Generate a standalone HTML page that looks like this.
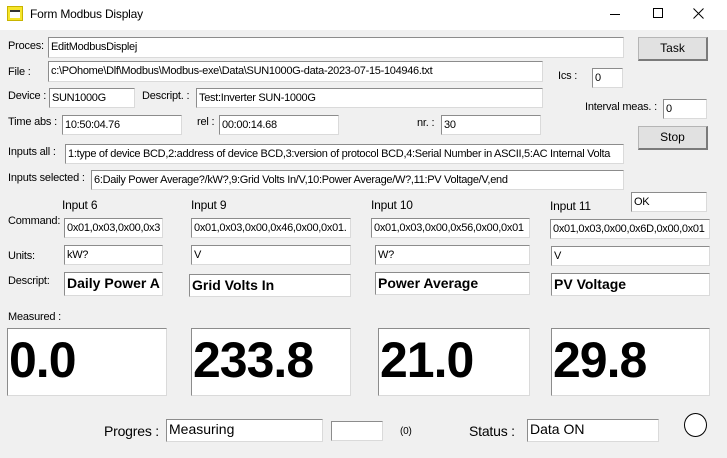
<!DOCTYPE html>
<html><head><meta charset="utf-8"><style>
*{margin:0;padding:0;box-sizing:border-box}
body{width:727px;height:458px;background:#f0f0f0;font-family:"Liberation Sans",Arial,sans-serif;font-size:11px;color:#000;position:relative;overflow:hidden}
.tb{position:absolute;left:0;top:0;width:727px;height:30px;background:#fff}
.a{position:absolute;white-space:nowrap;letter-spacing:-0.2px}
.e{position:absolute;background:#fff;border-top:1px solid #8c8c8c;border-left:1px solid #8c8c8c;border-right:1px solid #dadada;border-bottom:1px solid #dadada;white-space:nowrap;overflow:hidden;padding:3px 0 0 2px;line-height:13px;letter-spacing:-0.3px}
.b{position:absolute;background:#e1e1e1;border:1px solid #b5b5b5;border-right:2px solid #7a7a7a;border-bottom:2px solid #7a7a7a;text-align:center;line-height:20px;font-size:12px}
.d{font-weight:bold;font-size:14px;padding-top:4px;letter-spacing:0}
.big{font-weight:bold;font-size:50px;line-height:50px;padding:6px 0 0 1px;letter-spacing:-1px}
</style></head><body>
<div class="tb"></div>
<div class="a" style="left:7px;top:6px;width:16px;height:15px;background:#f6e52a;border:1px solid #c8b400"><div style="position:absolute;left:2px;top:3px;width:10px;height:8px;background:#fff;border-top:2px solid #333"></div></div>
<div class="a" style="left:30px;top:7px;font-size:12px">Form Modbus Display</div>
<div class="a" style="left:610px;top:14px;width:10px;height:1px;background:#000"></div>
<div class="a" style="left:653px;top:8px;width:10px;height:10px;border:1px solid #000"></div>
<svg class="a" style="left:693px;top:8px" width="11" height="11"><path d="M0.5 0.5L10.5 10.5M10.5 0.5L0.5 10.5" stroke="#000" stroke-width="1"/></svg>

<div class="a" style="left:8px;top:40px">Proces:</div>
<div class="e" style="left:48px;top:37px;width:576px;height:21px">EditModbusDisplej</div>
<div class="b" style="left:638px;top:37px;width:70px;height:24px">Task</div>
<div class="a" style="left:8px;top:66px">File :</div>
<div class="e" style="left:48px;top:61px;width:495px;height:21px">c:\POhome\Dlf\Modbus\Modbus-exe\Data\SUN1000G-data-2023-07-15-104946.txt</div>
<div class="a" style="left:558px;top:70px">Ics :</div>
<div class="e" style="left:592px;top:68px;width:31px;height:20px">0</div>
<div class="a" style="left:8px;top:90px">Device :</div>
<div class="e" style="left:49px;top:88px;width:86px;height:20px">SUN1000G</div>
<div class="a" style="left:142px;top:90px">Descript. :</div>
<div class="e" style="left:196px;top:88px;width:347px;height:20px">Test:Inverter SUN-1000G</div>
<div class="a" style="left:585px;top:101px">Interval meas. :</div>
<div class="e" style="left:663px;top:99px;width:44px;height:20px">0</div>
<div class="a" style="left:8px;top:116px">Time abs :</div>
<div class="e" style="left:62px;top:115px;width:120px;height:20px">10:50:04.76</div>
<div class="a" style="left:197px;top:116px">rel :</div>
<div class="e" style="left:219px;top:115px;width:120px;height:20px">00:00:14.68</div>
<div class="a" style="left:417px;top:117px">nr. :</div>
<div class="e" style="left:441px;top:115px;width:100px;height:20px">30</div>
<div class="b" style="left:638px;top:126px;width:70px;height:24px">Stop</div>
<div class="a" style="left:8px;top:146px">Inputs all :</div>
<div class="e" style="left:65px;top:144px;width:559px;height:20px">1:type of device BCD,2:address of device BCD,3:version of protocol BCD,4:Serial Number in ASCII,5:AC Internal Volta</div>
<div class="a" style="left:8px;top:172px">Inputs selected :</div>
<div class="e" style="left:91px;top:170px;width:533px;height:20px">6:Daily Power Average?/kW?,9:Grid Volts In/V,10:Power Average/W?,11:PV Voltage/V,end</div>
<div class="e" style="left:631px;top:192px;width:76px;height:20px">OK</div>

<div class="a" style="left:62px;top:198px;font-size:12px">Input 6</div>
<div class="a" style="left:191px;top:198px;font-size:12px">Input 9</div>
<div class="a" style="left:371px;top:198px;font-size:12px">Input 10</div>
<div class="a" style="left:550px;top:199px;font-size:12px">Input 11</div>
<div class="a" style="left:8px;top:215px">Command:</div>
<div class="e" style="left:64px;top:218px;width:99px;height:20px">0x01,0x03,0x00,0x3</div>
<div class="e" style="left:191px;top:218px;width:160px;height:20px">0x01,0x03,0x00,0x46,0x00,0x01.</div>
<div class="e" style="left:371px;top:218px;width:159px;height:20px">0x01,0x03,0x00,0x56,0x00,0x01</div>
<div class="e" style="left:550px;top:219px;width:160px;height:20px">0x01,0x03,0x00,0x6D,0x00,0x01</div>
<div class="a" style="left:8px;top:250px">Units:</div>
<div class="e" style="left:64px;top:245px;width:99px;height:20px">kW?</div>
<div class="e" style="left:191px;top:245px;width:160px;height:20px">V</div>
<div class="e" style="left:375px;top:245px;width:155px;height:20px">W?</div>
<div class="e" style="left:551px;top:246px;width:159px;height:20px">V</div>
<div class="a" style="left:8px;top:275px">Descript:</div>
<div class="e d" style="left:64px;top:272px;width:99px;height:24px">Daily Power A</div>
<div class="e d" style="left:189px;top:274px;width:162px;height:23px">Grid Volts In</div>
<div class="e d" style="left:375px;top:272px;width:155px;height:23px">Power Average</div>
<div class="e d" style="left:551px;top:273px;width:159px;height:23px">PV Voltage</div>

<div class="a" style="left:8px;top:311px">Measured :</div>
<div class="e big" style="left:7px;top:328px;width:160px;height:68px">0.0</div>
<div class="e big" style="left:191px;top:328px;width:160px;height:68px">233.8</div>
<div class="e big" style="left:378px;top:328px;width:152px;height:68px">21.0</div>
<div class="e big" style="left:551px;top:328px;width:159px;height:68px">29.8</div>

<div class="a" style="left:104px;top:423px;font-size:14px">Progres :</div>
<div class="e" style="left:166px;top:419px;width:157px;height:23px;font-size:14px;padding-top:3px;letter-spacing:0">Measuring</div>
<div class="e" style="left:331px;top:421px;width:52px;height:20px"></div>
<div class="a" style="left:400px;top:426px;font-size:10px">(0)</div>
<div class="a" style="left:469px;top:423px;font-size:14px">Status :</div>
<div class="e" style="left:527px;top:419px;width:132px;height:23px;font-size:14px;padding-top:3px;letter-spacing:0">Data ON</div>
<div class="a" style="left:684px;top:413px;width:23px;height:24px;border:1px solid #000;border-radius:50%;background:#fff"></div>
</body></html>
